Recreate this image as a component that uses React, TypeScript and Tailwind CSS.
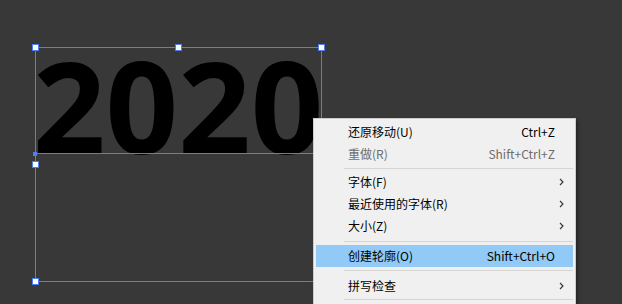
const blue = "border-[#4d7ff0]";

function Handle({ x, y }: { x: number; y: number }) {
  return (
    <div
      className={`absolute w-[7px] h-[7px] bg-white border ${blue}`}
      style={{ left: x - 3, top: y - 3 }}
    />
  );
}

function Chevron() {
  return (
    <svg width="5" height="8" viewBox="0 0 5 8" className="text-[#333]">
      <path d="M1 1 L4 4 L1 7" fill="none" stroke="currentColor" strokeWidth="1.1" />
    </svg>
  );
}

type Item = {
  label: string;
  shortcut?: string;
  sub?: boolean;
  disabled?: boolean;
  active?: boolean;
};

function Row({ label, shortcut, sub, disabled, active }: Item) {
  return (
    <div
      className={`flex items-center h-[22px] pl-[32px] ${active ? "bg-[#91c9f7]" : ""} ${
        disabled ? "text-[#6d6d6d]" : "text-black"
      }`}
    >
      <span className="flex-1">{label}</span>
      {shortcut && <span className="pr-[18px]">{shortcut}</span>}
      {sub && (
        <span className="w-[18px] pl-[4px] flex items-center">
          <Chevron />
        </span>
      )}
    </div>
  );
}

function Sep({ mt, mb }: { mt: string; mb: string }) {
  return <div className={`ml-[28px] h-px bg-[#d5d5d5] ${mt} ${mb}`} />;
}

export default function App() {
  return (
    <div className="relative w-[622px] h-[304px] bg-[#383838] overflow-hidden">
      {/* text object on the canvas */}
      <div className={`absolute left-[35px] top-[47px] w-[287px] h-[235px] border ${blue}`}>
        <div
          className="absolute left-[-3px] top-[-7px] text-[127px] leading-none font-bold text-black select-none"
          style={{ fontFamily: '"Open Sans", "Noto Sans", sans-serif' }}
        >
          2020
        </div>
        <div className="absolute left-0 right-0 top-[105px] h-px bg-[#4d7ff0]" />
      </div>

      <Handle x={35} y={47} />
      <Handle x={178} y={47} />
      <Handle x={321} y={47} />
      <Handle x={35} y={164} />
      <Handle x={35} y={281} />
      <div className="absolute left-[33px] top-[152px] w-[4px] h-[4px] bg-[#4d7ff0]" />

      {/* context menu */}
      <div
        className="absolute left-[313px] top-[118px] w-[263px] bg-[#f0f0f0] border border-[#cccccc] pt-[2px] px-[2px] text-[12px] shadow-[2px_2px_3px_rgba(0,0,0,0.35)]"
        style={{ fontFamily: '"Noto Sans CJK SC", "Noto Sans", sans-serif' }}
      >
        <Row label="还原移动(U)" shortcut="Ctrl+Z" />
        <Row label="重做(R)" shortcut="Shift+Ctrl+Z" disabled />
        <Sep mt="mt-[3px]" mb="mb-[2px]" />
        <Row label="字体(F)" sub />
        <Row label="最近使用的字体(R)" sub />
        <Row label="大小(Z)" sub />
        <Sep mt="mt-[4px]" mb="mb-[3px]" />
        <Row label="创建轮廓(O)" shortcut="Shift+Ctrl+O" active />
        <Sep mt="mt-[3px]" mb="mb-[4px]" />
        <Row label="拼写检查" sub />
        <Sep mt="mt-[2px]" mb="mb-[6px]" />
      </div>
    </div>
  );
}
